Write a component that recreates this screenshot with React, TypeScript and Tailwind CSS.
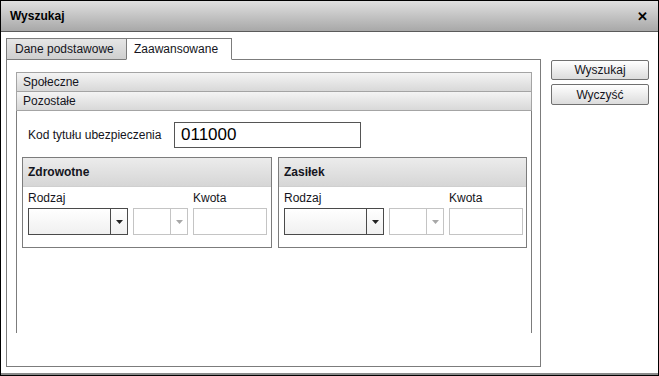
function Arrow({ disabled }: { disabled?: boolean }) {
  return (
    <svg width="7" height="4" viewBox="0 0 7 4">
      <path d="M0 0h7L3.5 4z" fill={disabled ? '#a8a8a8' : '#222'} />
    </svg>
  )
}

function Select({ width, disabled }: { width: string; disabled?: boolean }) {
  return (
    <div
      className={`flex h-[27px] ${width} border ${
        disabled ? 'border-[#c4c4c4] bg-white' : 'border-[#4a4a4a] bg-gradient-to-b from-white to-[#f0f0f0]'
      }`}
    >
      <div className="flex-1" />
      <div
        className={`flex w-[17px] items-center justify-center border-l ${
          disabled ? 'border-[#c4c4c4]' : 'border-[#4a4a4a]'
        }`}
      >
        <Arrow disabled={disabled} />
      </div>
    </div>
  )
}

function Group({ title, width }: { title: string; width: string }) {
  return (
    <div className={`${width} h-[91px] border border-[#7c7c7c]`}>
      <div className="flex h-[29px] items-center border-b border-[#cfcfcf] bg-gradient-to-b from-[#ececec] to-[#d6d6d6] pl-[5px] font-bold">
        {title}
      </div>
      <div className="flex gap-[5px] pl-[5px] pt-[3px]">
        <div className="flex flex-col">
          <span className="leading-[16px]">Rodzaj</span>
          <div className="mt-[2px] flex gap-[5px]">
            <Select width="w-[100px]" />
            <Select width="w-[55px]" disabled />
          </div>
        </div>
        <div className="flex flex-col">
          <span className="leading-[16px]">Kwota</span>
          <div className="mt-[2px] h-[27px] w-[74px] border border-[#c4c4c4] bg-white" />
        </div>
      </div>
    </div>
  )
}

export default function App() {
  return (
    <div className="flex h-[376px] w-[659px] flex-col border border-black bg-white font-['Liberation_Sans',Arial,sans-serif] text-[12px] text-[#141420]">
      {/* Title bar */}
      <div className="flex h-[31px] shrink-0 items-center justify-between border-b border-[#5a5a5a] bg-gradient-to-b from-[#e0e0e0] to-[#a8a8a8] pl-[9px] pr-[10px]">
        <span className="font-bold text-black">Wyszukaj</span>
        <span className="text-[13px] font-bold leading-none text-black">✕</span>
      </div>

      <div className="flex flex-1 border-b-2 border-[#8a8a8a] pl-[5px] pt-[6px]">
        {/* Tabs */}
        <div className="flex w-[535px] flex-col">
          <div className="relative z-10 -mb-px flex">
            <div className="flex h-[22px] w-[121px] items-center border border-[#7c7c7c] bg-gradient-to-b from-[#e6e6e6] to-[#cfcfcf] pl-[8px]">
              Dane podstawowe
            </div>
            <div className="-ml-px flex h-[22px] w-[106px] items-center border border-b-white border-[#7c7c7c] bg-white pl-[7px]">
              Zaawansowane
            </div>
          </div>
          <div className="h-[308px] border border-[#7c7c7c] pl-[9px] pr-[8px] pt-[12px]">
            {/* Accordion */}
            <div className="flex flex-col">
              <div className="flex h-[20px] items-center border border-[#a4a4a4] bg-gradient-to-b from-[#f4f4f4] to-[#d8d8d8] pl-[6px]">
                Społeczne
              </div>
              <div className="-mt-px flex h-[20px] items-center border border-[#a4a4a4] bg-gradient-to-b from-[#f4f4f4] to-[#d8d8d8] pl-[6px]">
                Pozostałe
              </div>
              <div className="h-[222px] border-x border-[#7c7c7c] pl-[5px] pt-[11px]">
                <div className="flex items-center pl-[6px]">
                  <span className="w-[146px]">Kod tytułu ubezpieczenia</span>
                  <div className="flex h-[26px] w-[187px] items-center border border-[#555] pl-[6px] text-[17px] text-black">
                    011000
                  </div>
                </div>
                <div className="mt-[9px] flex gap-[6px]">
                  <Group title="Zdrowotne" width="w-[250px]" />
                  <Group title="Zasiłek" width="w-[249px]" />
                </div>
              </div>
            </div>
          </div>
        </div>

        {/* Buttons */}
        <div className="ml-[10px] mt-[22px] flex w-[98px] flex-col gap-[4px]">
          <button className="h-[20px] rounded-[2px] border border-[#707070] bg-gradient-to-b from-white to-[#dcdcdc] text-[#141420]">
            Wyszukaj
          </button>
          <button className="h-[21px] rounded-[2px] border border-[#707070] bg-gradient-to-b from-white to-[#dcdcdc] text-[#141420]">
            Wyczyść
          </button>
        </div>
      </div>
    </div>
  )
}
